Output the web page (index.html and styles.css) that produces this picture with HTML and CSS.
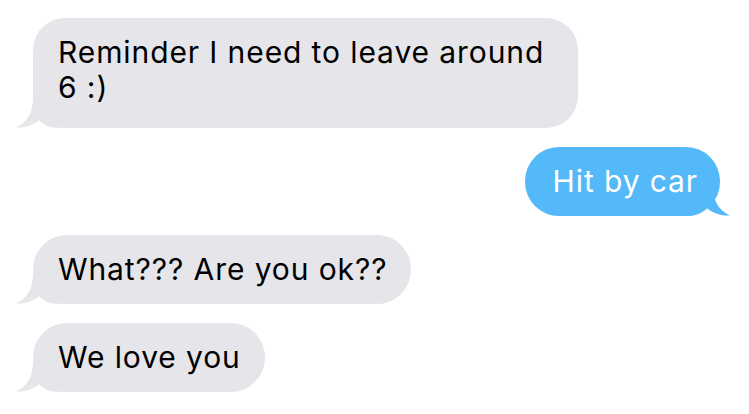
FILE: index.html
```html
<!DOCTYPE html>
<html>
<head>
<meta charset="utf-8">
<link rel="stylesheet" href="styles.css">
</head>
<body>
<div class="thread">
  <div class="bubble in tall">Reminder I need to leave around 6&nbsp;:)<svg class="tail" viewBox="0 0 45 30" width="45" height="30"><path d="M18 0 C18 14 13 24 1 29.5 C9 30 17 28 24 22 C28 26 33 30 45 30 L45 0 Z"/></svg></div>
  <div class="bubble out">Hit by car<svg class="tail" viewBox="0 0 45 30" width="45" height="30"><path d="M18 0 C18 14 13 24 1 29.5 C9 30 17 28 24 22 C28 26 33 30 45 30 L45 0 Z"/></svg></div>
  <div class="bubble in">What??? Are you ok??<svg class="tail" viewBox="0 0 45 30" width="45" height="30"><path d="M18 0 C18 14 13 24 1 29.5 C9 30 17 28 24 22 C28 26 33 30 45 30 L45 0 Z"/></svg></div>
  <div class="bubble in">We love you<svg class="tail" viewBox="0 0 45 30" width="45" height="30"><path d="M18 0 C18 14 13 24 1 29.5 C9 30 17 28 24 22 C28 26 33 30 45 30 L45 0 Z"/></svg></div>
</div>
</body>
</html>
```
FILE: styles.css
```css
html, body {
  margin: 0;
  padding: 0;
  background: #ffffff;
}
.thread {
  display: flex;
  flex-direction: column;
  gap: 19px;
  padding: 18px 29px 0 33px;
  font-family: "Inter", "Liberation Sans", Arial, sans-serif;
  font-size: 30px;
  letter-spacing: 0.9px;
  line-height: 35px;
}
.bubble {
  position: relative;
  z-index: 0;
  box-sizing: border-box;
  max-width: 545px;
  padding: 17px 24px 17px 25px;
  border-radius: 34px;
}
.bubble.tall {
  padding-bottom: 23px;
  border-radius: 32px;
}
.bubble.in {
  align-self: flex-start;
  background: #e5e5ea;
  color: #000000;
}
.bubble.out {
  align-self: flex-end;
  background: #54b9f9;
  color: #ffffff;
  padding-left: 28px;
  padding-right: 22px;
}
.tail {
  position: absolute;
  z-index: -1;
  bottom: 0;
  display: block;
}
.in .tail {
  left: -18px;
  fill: #e5e5ea;
}
.out .tail {
  right: -11px;
  transform: scaleX(-1);
  fill: #54b9f9;
}
```
